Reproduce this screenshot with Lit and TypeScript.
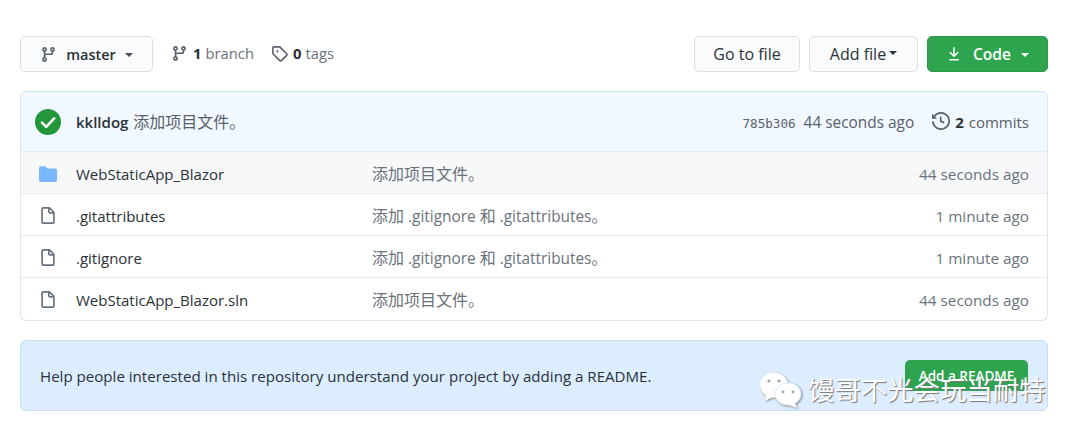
import { LitElement, html, css, svg } from "lit";
import { customElement } from "lit/decorators.js";

const branchPath = "M11.75 2.5a.75.75 0 1 0 0 1.5.75.75 0 0 0 0-1.5zm-2.25.75a2.25 2.25 0 1 1 3 2.122V6A2.5 2.5 0 0 1 10 8.5H6a1 1 0 0 0-1 1v1.128a2.251 2.251 0 1 1-1.5 0V5.372a2.25 2.25 0 1 1 1.5 0v1.836A2.492 2.492 0 0 1 6 7h4a1 1 0 0 0 1-1v-.628A2.25 2.25 0 0 1 9.5 3.25zM4.25 12a.75.75 0 1 0 0 1.5.75.75 0 0 0 0-1.5zM3.5 3.25a.75.75 0 1 1 1.5 0 .75.75 0 0 1-1.5 0z";
const tagPath = "M2.5 7.775V2.75a.25.25 0 0 1 .25-.25h5.025a.25.25 0 0 1 .177.073l6.25 6.25a.25.25 0 0 1 0 .354l-5.025 5.025a.25.25 0 0 1-.354 0l-6.25-6.25a.25.25 0 0 1-.073-.177zm-1.5 0V2.75C1 1.784 1.784 1 2.75 1h5.025c.464 0 .91.184 1.238.513l6.25 6.25a1.75 1.75 0 0 1 0 2.474l-5.026 5.026a1.75 1.75 0 0 1-2.474 0l-6.25-6.25A1.75 1.75 0 0 1 1 7.775zM6 5a1 1 0 1 0 0 2 1 1 0 0 0 0-2z";
const filePath = "M3.75 1.5a.25.25 0 0 0-.25.25v11.5c0 .138.112.25.25.25h8.5a.25.25 0 0 0 .25-.25V6H9.75A1.75 1.75 0 0 1 8 4.25V1.5H3.75zm5.75.56v2.19c0 .138.112.25.25.25h2.19L9.5 2.06zM2 1.75C2 .784 2.784 0 3.75 0h5.086c.464 0 .909.184 1.237.513l3.414 3.414c.329.328.513.773.513 1.237v8.086A1.75 1.75 0 0 1 12.25 15h-8.5A1.75 1.75 0 0 1 2 13.25V1.75z";
const folderPath = "M1.75 1A1.75 1.75 0 0 0 0 2.75v10.5C0 14.216.784 15 1.75 15h12.5A1.75 1.75 0 0 0 16 13.25v-8.5A1.75 1.75 0 0 0 14.25 3H7.5a.25.25 0 0 1-.2-.1l-.9-1.2C6.07 1.26 5.55 1 5 1H1.75z";
const historyPath = "M1.643 3.143L.427 1.927A.25.25 0 0 0 0 2.104V5.75c0 .138.112.25.25.25h3.646a.25.25 0 0 0 .177-.427L2.715 4.215a6.5 6.5 0 1 1-1.18 4.458.75.75 0 1 0-1.493.154 8.001 8.001 0 1 0 1.6-5.684zM7.75 4a.75.75 0 0 1 .75.75v2.992l2.028.812a.75.75 0 0 1-.557 1.392l-2.5-1A.75.75 0 0 1 7 8.25v-3.5A.75.75 0 0 1 7.75 4z";
const downloadPath = "M7.47 10.78a.75.75 0 0 0 1.06 0l3.75-3.75a.75.75 0 0 0-1.06-1.06L8.75 8.44V1.75a.75.75 0 0 0-1.5 0v6.69L4.78 5.97a.75.75 0 0 0-1.06 1.06l3.75 3.75zM3.75 13a.75.75 0 0 0 0 1.5h8.5a.75.75 0 0 0 0-1.5h-8.5z";

const icon = (d: string, cls: string) => html`<svg class=${cls} viewBox="0 0 16 16" aria-hidden="true">${svg`<path fill="currentColor" fill-rule="evenodd" d=${d}></path>`}</svg>`;

/* Chinese runs are set a little larger than the Latin text around them. */
const mixed = (text: string) =>
  text.split(/([\u3000-\u9fff]+)/).map((part, i) => (i % 2 ? html`<span class="zh">${part}</span>` : part));

const rows = [
  { name: "WebStaticApp_Blazor", msg: "添加项目文件。", age: "44 seconds ago", dir: true },
  { name: ".gitattributes", msg: "添加 .gitignore 和 .gitattributes。", age: "1 minute ago", dir: false },
  { name: ".gitignore", msg: "添加 .gitignore 和 .gitattributes。", age: "1 minute ago", dir: false },
  { name: "WebStaticApp_Blazor.sln", msg: "添加项目文件。", age: "44 seconds ago", dir: false },
];

@customElement("app-root")
export class AppRoot extends LitElement {
  static styles = css`
    :host {
      display: block;
      width: 1080px;
      height: 437px;
      position: relative;
      overflow: hidden;
      background: #fff;
      color: #2b3137;
      font-family: "Open Sans", "Noto Sans CJK SC", sans-serif;
      font-size: 15px;
    }
    .zh { font-size: 16px; }
    .page { padding: 36px 32px 0 20px; display: flex; flex-direction: column; }
    .bar { display: flex; align-items: center; height: 36px; }
    .btn {
      box-sizing: border-box;
      height: 36px;
      display: flex;
      align-items: center;
      justify-content: center;
      border: 1px solid #dcdfe2;
      border-radius: 5px;
      background: #fafbfc;
      font-weight: 500;
      font-size: 16px;
      color: #2b3137;
    }
    .btn svg { flex: none; }
    .master { width: 133px; margin-right: 18px; }
    .master .i { width: 17px; height: 17px; color: #586069; margin-right: 9px; }
    .master .name { font-weight: 600; font-size: 14.5px; }
    .caret { width: 0; height: 0; border: 4.5px solid transparent; border-top-color: currentColor; border-bottom: 0; display: block; }
    .master .caret { margin-left: 9px; color: #444d56; margin-top: 2px; }
    .meta { display: flex; align-items: center; color: #6a737d; font-size: 14.8px; margin-bottom: 2px; }
    .meta svg { width: 17px; height: 17px; color: #586069; margin-right: 5px; }
    .meta b { color: #2b3137; font-weight: 700; margin-right: 4px; }
    .meta.b { margin-right: 17px; }
    .spacer { flex: 1; }
    .gofile { width: 106px; margin-right: 9px; }
    .addfile { width: 109px; margin-right: 9px; }
    .addfile .caret { margin-left: 3px; margin-top: -2px; }
    .code {
      width: 121px;
      background: #2ea44f;
      border-color: #2a9a4a;
      color: #fff;
      font-weight: 600;
      font-size: 15.6px;
    }
    .code .i { width: 16px; height: 16px; margin-right: 11px; }
    .code .caret { margin-left: 10px; margin-top: 2px; }
    .box {
      margin-top: 19px;
      border: 1px solid #e1e4e8;
      border-top: 0;
      border-radius: 6px;
      overflow: hidden;
    }
    .head {
      box-sizing: border-box;
      height: 61px;
      display: flex;
      align-items: center;
      padding: 0 18px 0 14px;
      margin: 0 -1px;
      background: #f1f8ff;
      border: 1px solid #c8e1ff;
      border-bottom-color: #e3edf7;
      border-radius: 6px 6px 0 0;
      color: #586069;
    }
    .check { width: 26px; height: 26px; margin-right: 15px; flex: none; }
    .line { flex: 1; display: flex; align-items: baseline; margin-top: -2px; }
    .author { font-weight: 600; color: #2b3137; margin-right: 5px; }
    .sha { font-family: "DejaVu Sans Mono", monospace; font-size: 12.6px; color: #586069; margin-right: 8px; }
    .age-h { font-size: 15.4px; }
    .hist { width: 18px; height: 18px; margin-left: 18px; margin-right: 5px; color: #586069; align-self: center; }
    .head b { color: #2b3137; font-weight: 700; margin-right: 5px; }
    .row {
      box-sizing: border-box;
      height: 42px;
      display: grid;
      grid-template-columns: 55px 296px 1fr auto;
      align-items: center;
      padding: 2px 18px 0 0;
      border-bottom: 1px solid #eaecef;
      color: #2b3137;
    }
    .row:last-child { border-bottom: 0; }
    .row.dir { background: #f6f8fa; }
    .row .ic { display: flex; padding-left: 18px; }
    .row svg { width: 18px; height: 18px; color: #6a737d; }
    .row.dir svg { color: #79b8ff; }
    .row .msg, .row .age { color: #6a737d; }
    .row .msg { font-size: 15.4px; margin-top: -2px; }
    .row .age { font-size: 15.3px; }
    .readme {
      box-sizing: border-box;
      height: 71px;
      margin-top: 19px;
      display: flex;
      align-items: center;
      justify-content: space-between;
      padding: 0 19px;
      background: #dbedff;
      border: 1px solid #c6dcf3;
      border-radius: 6px;
      color: #2b3137;
      font-size: 15.1px;
    }
    .add {
      box-sizing: border-box;
      width: 123px;
      height: 31px;
      background: #2ea44f;
      color: #fff;
      border-radius: 5px;
      display: flex;
      align-items: center;
      justify-content: center;
      font-weight: 600;
      font-size: 13.5px;
    }
    .wm {
      position: absolute;
      left: 759px;
      top: 369px;
      display: flex;
      align-items: center;
      color: #fff;
      font-family: "Noto Sans CJK SC", sans-serif;
      font-size: 26.4px;
      line-height: 40px;
      text-shadow: 1px 1px 1px #777;
    }
    .wm svg { width: 43px; height: 38px; margin-right: 6px; filter: drop-shadow(1px 1px 1px #888); }
  `;

  render() {
    return html`
      <div class="page">
        <div class="bar">
          <div class="btn master">${icon(branchPath, "i")}<span class="name">master</span><span class="caret"></span></div>
          <div class="meta b">${icon(branchPath, "")}<b>1</b>branch</div>
          <div class="meta">${icon(tagPath, "")}<b>0</b>tags</div>
          <div class="spacer"></div>
          <div class="btn gofile">Go to file</div>
          <div class="btn addfile">Add file<span class="caret"></span></div>
          <div class="btn code">${icon(downloadPath, "i")}Code<span class="caret"></span></div>
        </div>
        <div class="box">
          <div class="head">
            <svg class="check" viewBox="0 0 26 26" aria-hidden="true">
              <circle cx="13" cy="13" r="13" fill="#22973a"></circle>
              <path d="M7 13.6l4.2 4.2L19.2 9.4" fill="none" stroke="#fff" stroke-width="2.6" stroke-linecap="round" stroke-linejoin="round"></path>
            </svg>
            <div class="line">
              <span class="author">kklldog</span><span class="zh">添加项目文件。</span>
              <span class="spacer"></span>
              <span class="sha">785b306</span><span class="age-h">44 seconds ago</span>
              ${icon(historyPath, "hist")}<b>2</b><span>commits</span>
            </div>
          </div>
          ${rows.map(r => html`
            <div class="row ${r.dir ? "dir" : ""}">
              <span class="ic">${icon(r.dir ? folderPath : filePath, "")}</span>
              <span>${r.name}</span>
              <span class="msg">${mixed(r.msg)}</span>
              <span class="age">${r.age}</span>
            </div>`)}
        </div>
        <div class="readme">
          <span>Help people interested in this repository understand your project by adding a README.</span>
          <span class="add">Add a README</span>
        </div>
      </div>
      <div class="wm">
        <svg viewBox="0 0 43 38" aria-hidden="true">
          <ellipse cx="15" cy="15" rx="14" ry="12.5" fill="#fff"></ellipse>
          <path d="M7 24l-1 7 8-4z" fill="#fff"></path>
          <ellipse cx="29" cy="24" rx="13" ry="11" fill="#fff" stroke="#dbedff" stroke-width="1"></ellipse>
          <path d="M36 32l2 6-8-3z" fill="#fff"></path>
          <circle cx="10" cy="11" r="1.6" fill="#9aa"></circle>
          <circle cx="20" cy="11" r="1.6" fill="#9aa"></circle>
          <circle cx="24" cy="22" r="1.4" fill="#9aa"></circle>
          <circle cx="34" cy="22" r="1.4" fill="#9aa"></circle>
        </svg>
        <span>馒哥不光会玩当耐特</span>
      </div>
    `;
  }
}
